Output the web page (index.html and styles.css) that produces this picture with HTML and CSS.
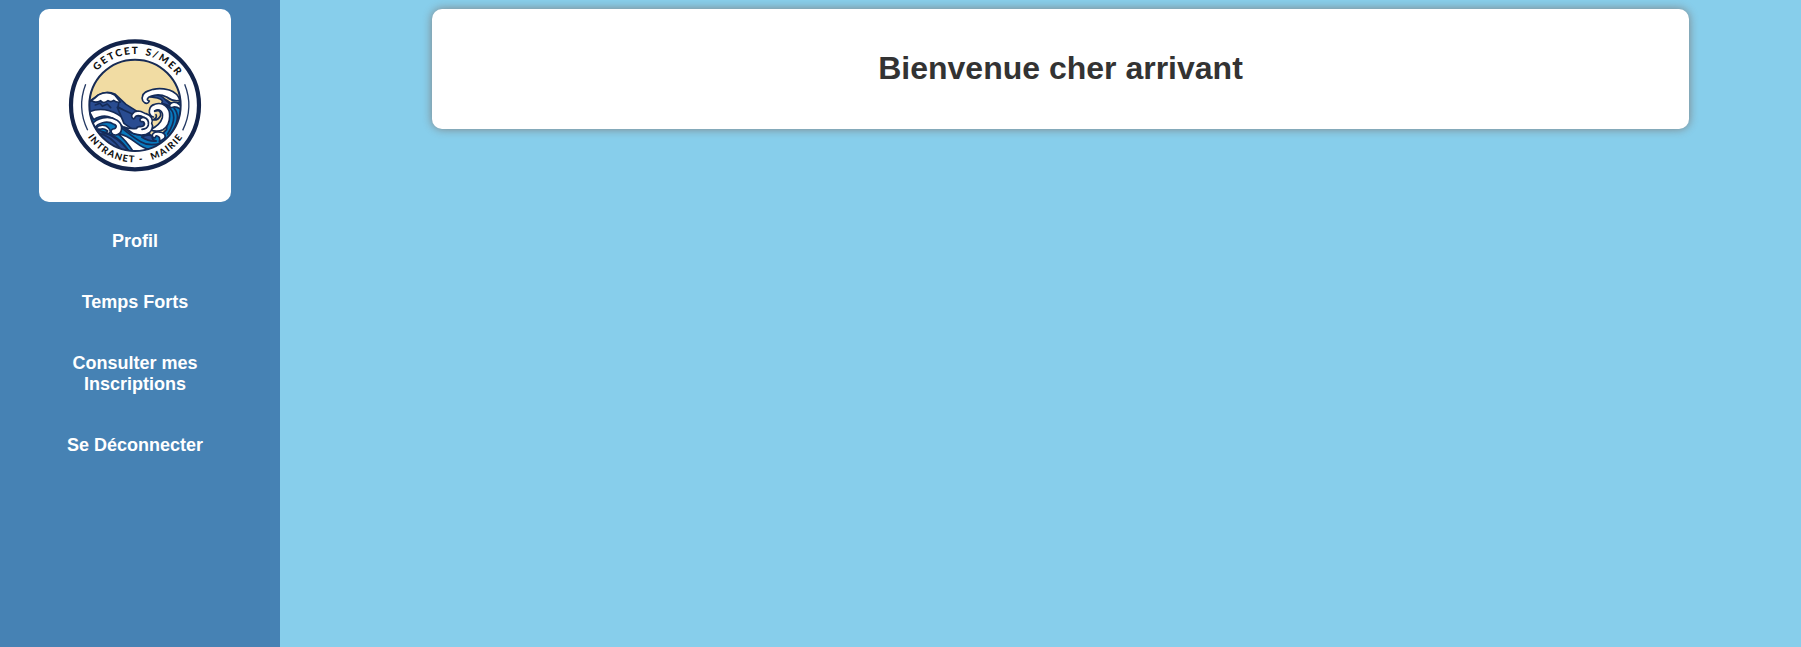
FILE: index.html
```html
<!DOCTYPE html>
<html lang="fr">
<head>
<meta charset="utf-8">
<title>Intranet Mairie</title>
<link rel="stylesheet" href="styles.css">
</head>
<body>
<aside class="sidebar">
  <div class="logo">
    <svg viewBox="117 27 576 579" role="img" aria-label="Getcet s/Mer, intranet mairie">
      <defs>
        <clipPath id="scene"><circle cx="405" cy="316" r="138"/></clipPath>
        <path id="arc-top" d="M291 213A153 153 0 0 1 558 317"/>
        <path id="arc-bottom" d="M263 411A172 172 0 0 0 553 404"/>
      </defs>
      <circle class="ring" cx="405" cy="316" r="192"/>
      <g clip-path="url(#scene)" class="waves">
        <rect class="sand" x="260" y="170" width="290" height="290"/>
        <!-- mountain -->
        <path class="navy" d="M260 312L292 287Q318 269 346 283L378 313L440 352L460 470H260Z"/>
        <path class="white" d="M270 303Q287 294 296 284Q321 272 344 285L361 306Q350 309 341 301Q333 308 324 302Q310 313 302 302Q287 310 277 303Z"/>
        <path class="line" d="M286 315L300 310L307 319L322 312L332 323M356 311L354 321L369 329"/>
        <!-- right crest -->
        <path class="blue" d="M500 300Q517 318 545 304V460H430Q475 415 500 388Z"/>
        <path class="navy" d="M452 291Q477 278 494 297Q508 307 514 320Q500 314 485 310Q493 300 472 294Z"/>
        <path class="white" d="M448 303C442 318 424 306 427 291C430 273 449 272 460 268C482 263 495 267 508 270C525 276 535 285 540 301Q520 306 500 291C482 282 465 284 452 289C442 292 438 300 448 303Z"/>
        <path class="white" d="M508 318Q512 303 530 308L546 319L541 327Q526 318 518 322Q511 325 508 318Z"/>
        <!-- lower swell -->
        <path class="blue" d="M262 345Q310 320 352 352Q385 391 420 400Q455 414 484 398L505 430L440 465L340 445L270 390Z"/>
        <path class="white" d="M268 335C310 319 350 335 376 361Q405 397 450 404Q420 411 390 397Q371 384 354 367C325 339 298 348 281 359Z"/>
        <path class="navy" d="M280 390Q320 393 349 413Q374 431 394 465H330Z"/>
        <path class="white" d="M352 400Q380 405 408 428Q430 445 450 449L442 465H406Q383 425 352 400Z"/>
        <path class="line" d="M363 382Q397 410 422 425T482 430M294 400Q330 404 365 451M307 397Q351 407 390 457M502 319Q540 343 503 402M522 324Q545 350 516 397"/>
        <path class="white" d="M276 373C288 355 325 343 352 361C371 375 368 403 348 405C333 406 329 390 339 387C350 386 352 376 342 373C320 359 292 371 286 383Z"/>
        <path class="white" d="M287 386C297 372 317 374 324 382Q337 395 325 401Q317 397 323 393Q310 383 301 388Z"/>
        <!-- curls -->
        <path class="white" d="M460 351C441 344 446 317 464 313C488 304 511 322 509 349Q509 377 489 389Q470 398 451 389Q481 374 487 353C491 334 477 324 464 333"/>
        <path class="sand" d="M464 334Q483 327 482 346Q476 361 459 360Q473 353 468 344"/>
        <path class="navy" d="M352 322L392 340L430 352L434 388L400 390L372 370Z"/>
        <path class="white" d="M401 357C388 350 397 334 415 333C428 333 434 342 438 341C455 346 460 359 455 370C462 380 453 394 449 397C437 407 419 407 400 401L372 381Q392 388 410 385C412 376 421 382 428 379C437 374 434 363 424 365C414 360 424 351 432 352C421 345 407 344 405 353Z"/>
        <path class="line" d="M432 352Q448 357 445 375Q442 387 426 388"/>
        <path class="white" d="M461 414C450 405 463 393 476 396C493 397 500 407 493 415L478 426Q482 411 472 408Q466 406 466 413Z"/>
        <path class="navy" d="M425 411Q443 401 457 408Q454 420 469 423Q450 427 425 411Z"/>
      </g>
      <circle class="horizon" cx="405" cy="316" r="137"/>
      <path class="side" d="M257 253Q230 323 263 391M554 253Q582 323 548 391"/>
      <text class="motto"><textPath href="#arc-top" textLength="275">GETCET S/MER</textPath></text>
      <text class="motto small"><textPath href="#arc-bottom" textLength="335" xml:space="preserve">INTRANET -  MAIRIE</textPath></text>
    </svg>
  </div>
  <nav class="menu">
    <a class="link">Profil</a>
    <a class="link">Temps Forts</a>
    <a class="link">Consulter mes Inscriptions</a>
    <a class="link">Se Déconnecter</a>
  </nav>
</aside>
<main class="content">
  <header class="banner"><h1 class="title">Bienvenue cher arrivant</h1></header>
</main>
</body>
</html>
```
FILE: styles.css
```css
* { box-sizing: border-box; }
body {
  margin: 0;
  min-height: 100vh;
  display: flex;
  background: #87ceeb;
  font-family: "Liberation Sans", Arial, sans-serif;
}
.sidebar {
  width: 280px;
  flex: none;
  padding: 9px 49px 0 39px;
  background: #4682b4;
}
.logo {
  height: 193px;
  border-radius: 10px;
  background: #fff;
}
.logo svg { display: block; width: 192px; height: 193px; }
.ring { fill: #fff; stroke: #12234a; stroke-width: 12.5; }
.horizon { fill: none; stroke: #172b55; stroke-width: 6; }
.side { fill: none; stroke: #243963; stroke-width: 4; }
.waves path { stroke: #142b58; stroke-width: 5; stroke-linejoin: round; stroke-linecap: round; }
.sand { fill: #f1dca3; }
.navy { fill: #294c91; }
.blue { fill: #0879bd; }
.white { fill: #fff; }
.waves .line { fill: none; }
.motto { font: 900 30px Lato, sans-serif; fill: #111; word-spacing: 5px; }
.small { font-size: 28px; white-space: pre; word-spacing: 2px; }
.menu {
  display: flex;
  flex-direction: column;
  gap: 40px;
  padding-top: 29px;
}
.link {
  color: #fff;
  font-size: 18px;
  font-weight: 700;
  line-height: 21px;
  text-align: center;
  padding: 0 20px;
}
.content { flex: 1; padding: 9px 112px 0 152px; }
.banner {
  height: 120px;
  padding-top: 41px;
  border-radius: 10px;
  background: #fff;
  box-shadow: 0 0 10px gray;
  text-align: center;
}
.title { margin: 0; color: #333; font-size: 32px; line-height: 37px; }
```
